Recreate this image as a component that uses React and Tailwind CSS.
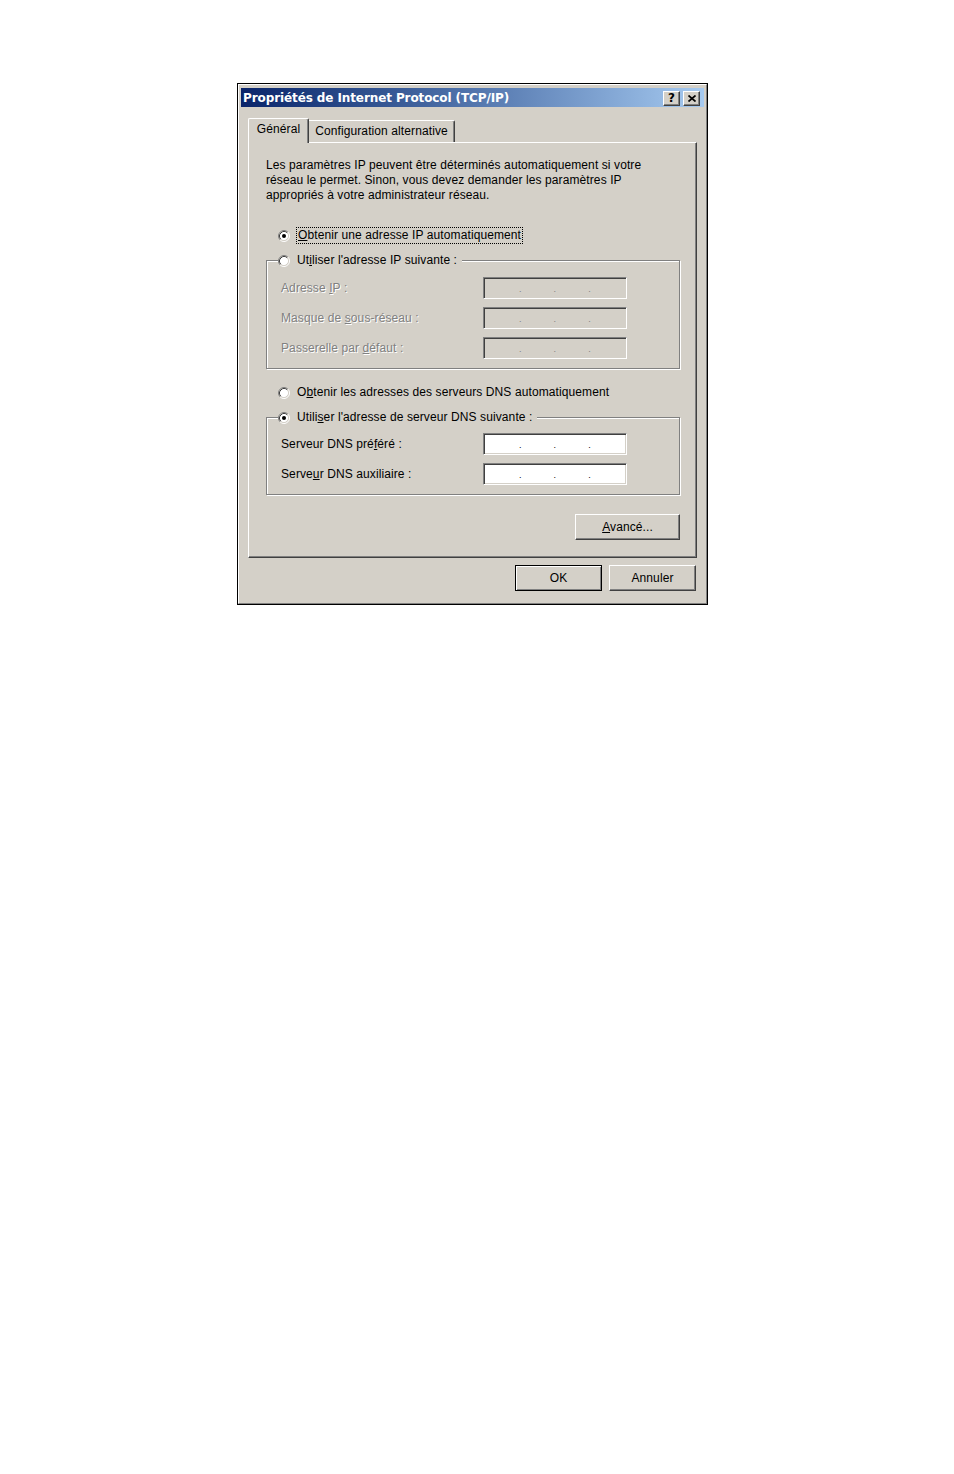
import React from 'react';

function Radio({ checked }) {
  return (
    <svg width="12" height="12" viewBox="0 0 12 12" className="shrink-0">
      <circle cx="6" cy="6" r="4.5" fill="#fff" />
      <path d="M2.11 9.89 A5.5 5.5 0 0 1 9.89 2.11" fill="none" stroke="#808080" strokeWidth="1" />
      <path d="M9.89 2.11 A5.5 5.5 0 0 1 2.11 9.89" fill="none" stroke="#fff" strokeWidth="1" />
      <path d="M2.82 9.18 A4.5 4.5 0 0 1 9.18 2.82" fill="none" stroke="#404040" strokeWidth="1" />
      <path d="M9.18 2.82 A4.5 4.5 0 0 1 2.82 9.18" fill="none" stroke="#d4d0c8" strokeWidth="1" />
      {checked && <circle cx="6" cy="6" r="2" fill="#000" />}
    </svg>
  );
}

function IpField({ disabled }) {
  return (
    <div
      className={`flex h-[22px] w-[144px] items-center gap-[32px] border border-t-[#808080] border-l-[#808080] border-r-white border-b-white pl-[35px] pt-[3px] shadow-[inset_1px_1px_0_#404040,inset_-1px_-1px_0_#d4d0c8] ${
        disabled ? 'bg-[#d4d0c8] text-[#808080]' : 'bg-white text-black'
      }`}
    >
      <span className="text-[9px] leading-none">.</span>
      <span className="text-[9px] leading-none">.</span>
      <span className="text-[9px] leading-none">.</span>
    </div>
  );
}

function FieldRow({ label, disabled }) {
  return (
    <div className="flex items-center">
      <span
        className={`w-[202px] ${
          disabled ? 'text-[#808080] [text-shadow:1px_1px_0_#fff]' : 'text-black'
        }`}
      >
        {label}
      </span>
      <IpField disabled={disabled} />
    </div>
  );
}

function GroupBox({ legend, children, className }) {
  return (
    <div
      className={`relative border border-[#808080] shadow-[1px_1px_0_#fff,inset_1px_1px_0_#fff] ${className}`}
    >
      {/* legend radio sits over the group's top line */}
      <div className="absolute -top-[9px] left-[11px] flex h-[17px] items-center gap-[7px] bg-[#d4d0c8] pr-[5px]">
        {legend}
      </div>
      {children}
    </div>
  );
}

function Button({ children, isDefault, className }) {
  return (
    <button
      className={`flex h-[26px] items-center justify-center bg-[#d4d0c8] ${
        isDefault
          ? 'border border-black shadow-[inset_1px_1px_0_#fff,inset_-1px_-1px_0_#808080,inset_-2px_-2px_0_#d4d0c8]'
          : 'border border-t-white border-l-white border-r-[#404040] border-b-[#404040] shadow-[inset_-1px_-1px_0_#808080]'
      } ${className}`}
    >
      {children}
    </button>
  );
}

function CaptionButton({ children }) {
  return (
    <div className="flex h-[15px] w-[17px] items-center justify-center border border-t-white border-l-white border-r-[#404040] border-b-[#404040] bg-[#d4d0c8] shadow-[inset_-1px_-1px_0_#808080]">
      {children}
    </div>
  );
}

export default function App() {
  return (
    <div className="min-h-[1474px] w-[954px] bg-white pt-[83px] font-['Liberation_Sans',Arial,sans-serif] text-[12px] leading-[15px] tracking-[0.1px] text-black">
      {/* Dialog */}
      <div className="ml-[237px] h-[522px] w-[471px] border border-black bg-[#d4d0c8]">
        <div className="h-full border border-t-white border-l-white border-r-[#808080] border-b-[#808080] px-[2px] pt-[3px]">
          {/* Title bar */}
          <div className="flex h-[19px] items-center justify-between bg-gradient-to-r from-[#0a246a] to-[#a6caf0] pl-[2px] pr-[4px]">
            <span className="pt-[2px] font-['DejaVu_Sans',Verdana,sans-serif] text-[12px] font-bold tracking-[-0.1px] text-white">
              Propriétés de Internet Protocol (TCP/IP)
            </span>
            <div className="flex items-center gap-[3px] pt-[1px]">
              <CaptionButton>
                <span className="font-['DejaVu_Sans',sans-serif] text-[12px] font-bold leading-none tracking-normal">?</span>
              </CaptionButton>
              <CaptionButton>
                <svg width="8" height="7" viewBox="0 0 8 7">
                  <path d="M0.5 0.5 L7.5 6.5 M7.5 0.5 L0.5 6.5" stroke="#000" strokeWidth="1.7" />
                </svg>
              </CaptionButton>
            </div>
          </div>

          <div className="px-[7px] pt-[11px]">
            {/* Tabs */}
            <div className="flex h-[24px] items-end">
              <div className="relative z-10 -mb-[1px] flex h-[25px] w-[61px] justify-center rounded-t-[2px] border-t border-l border-r border-t-white border-l-white border-r-[#404040] bg-[#d4d0c8] pt-[3px] shadow-[inset_-1px_0_0_#808080]">
                Général
              </div>
              <div className="flex h-[22px] w-[146px] items-center justify-center rounded-tr-[2px] border-t border-r border-t-white border-r-[#404040] pb-[1px] shadow-[inset_-1px_0_0_#808080]">
                Configuration alternative
              </div>
            </div>

            {/* Panel */}
            <div className="flex h-[416px] flex-col border border-t-white border-l-white border-r-[#404040] border-b-[#404040] pl-[17px] pr-[16px] pt-[15px] shadow-[inset_-1px_-1px_0_#808080]">
              <p className="whitespace-nowrap">
                Les paramètres IP peuvent être déterminés automatiquement si votre
                <br />
                réseau le permet. Sinon, vous devez demander les paramètres IP
                <br />
                appropriés à votre administrateur réseau.
              </p>

              <div className="mt-[24px] flex h-[17px] items-center gap-[6px] pl-[12px]">
                <Radio checked />
                <span className="border border-dotted border-black px-[1px] leading-[15px]">
                  <u>O</u>btenir une adresse IP automatiquement
                </span>
              </div>

              <GroupBox
                className="mt-[16px] flex flex-col gap-[8px] pl-[14px] pt-[16px] pb-[9px]"
                legend={
                  <>
                    <Radio />
                    <span>
                      Ut<u>i</u>liser l'adresse IP suivante :
                    </span>
                  </>
                }
              >
                <FieldRow
                  disabled
                  label={
                    <>
                      Adresse <u>I</u>P :
                    </>
                  }
                />
                <FieldRow
                  disabled
                  label={
                    <>
                      Masque de <u>s</u>ous-réseau :
                    </>
                  }
                />
                <FieldRow
                  disabled
                  label={
                    <>
                      Passerelle par <u>d</u>éfaut :
                    </>
                  }
                />
              </GroupBox>

              <div className="mt-[15px] flex h-[17px] items-center gap-[7px] pl-[12px]">
                <Radio />
                <span>
                  O<u>b</u>tenir les adresses des serveurs DNS automatiquement
                </span>
              </div>

              <GroupBox
                className="mt-[16px] flex flex-col gap-[8px] pl-[14px] pt-[15px] pb-[9px]"
                legend={
                  <>
                    <Radio checked />
                    <span>
                      Utili<u>s</u>er l'adresse de serveur DNS suivante :
                    </span>
                  </>
                }
              >
                <FieldRow
                  label={
                    <>
                      Serveur DNS pré<u>f</u>éré :
                    </>
                  }
                />
                <FieldRow
                  label={
                    <>
                      Serve<u>u</u>r DNS auxiliaire :
                    </>
                  }
                />
              </GroupBox>

              <div className="mt-[19px] flex justify-end">
                <Button className="w-[105px]">
                  <span>
                    <u>A</u>vancé...
                  </span>
                </Button>
              </div>
            </div>

            {/* Dialog buttons */}
            <div className="mt-[7px] flex justify-end gap-[7px] pr-[1px]">
              <Button isDefault className="w-[87px]">
                OK
              </Button>
              <Button className="w-[87px]">Annuler</Button>
            </div>
          </div>
        </div>
      </div>
    </div>
  );
}
